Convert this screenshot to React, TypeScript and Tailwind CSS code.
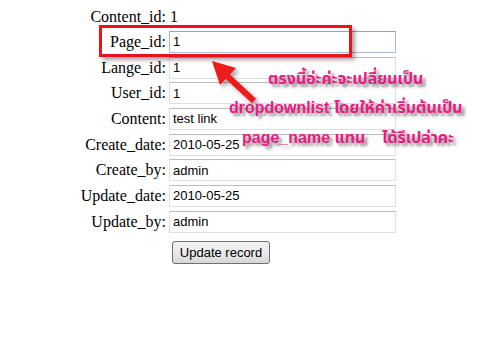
import React from "react";

const fields = [
  { label: "Page_id:", value: "1", focus: true },
  { label: "Lange_id:", value: "1" },
  { label: "User_id:", value: "1" },
  { label: "Content:", value: "test link" },
  { label: "Create_date:", value: "2010-05-25" },
  { label: "Create_by:", value: "admin" },
  { label: "Update_date:", value: "2010-05-25" },
  { label: "Update_by:", value: "admin" },
];

const note =
  "absolute text-[16px] font-bold text-[#ea1a82] whitespace-nowrap [text-shadow:3px_3px_3px_#8a8a8a] font-['Liberation_Sans','Tahoma','Noto_Sans_Thai','Loma','Garuda','DejaVu_Sans',sans-serif]";

export default function App() {
  return (
    <div className="relative w-[495px] h-[346px] overflow-hidden bg-white text-black font-['Liberation_Serif',serif] text-[16px]">
      <div className="pt-[5px]">
        <div className="flex h-[24px] items-center">
          <div className="w-[166px] text-right">Content_id:</div>
          <div className="pl-[4px]">1</div>
        </div>

        {fields.map((f) => (
          <div key={f.label} className="flex h-[25.7px] items-center">
            <div className="w-[166px] text-right">{f.label}</div>
            <div className="pl-[3px]">
              <input
                readOnly
                value={f.value}
                className={
                  "block w-[227px] h-[22px] px-[3px] bg-white font-['Liberation_Sans',Arial,sans-serif] text-[13px] text-black outline-none border " +
                  (f.focus
                    ? "border-[#a9bdd2] border-t-[#8fa6bd]"
                    : "border-[#dcdfe3] border-t-[#b9bcc1]")
                }
              />
            </div>
          </div>
        ))}

        <div className="flex pt-[5px]">
          <div className="w-[166px]" />
          <div className="pl-[6px]">
            <button className="h-[23px] w-[98px] rounded-[3px] border border-[#707070] bg-gradient-to-b from-[#f3f3f3] via-[#ebebeb] to-[#d6d6d6] font-['Liberation_Sans',Arial,sans-serif] text-[13px] text-black">
              Update record
            </button>
          </div>
        </div>
      </div>

      {/* red highlight box */}
      <div className="absolute left-[99px] top-[25px] w-[253px] h-[32px] border-[3px] border-[#e8141b] shadow-[3px_3px_4px_rgba(0,0,0,0.35)]" />

      {/* arrow */}
      <svg className="absolute left-0 top-0" width="495" height="346" viewBox="0 0 495 346">
        <defs>
          <filter id="sh" x="-20%" y="-20%" width="150%" height="150%">
            <feDropShadow dx="3" dy="3" stdDeviation="2" floodColor="#000" floodOpacity="0.35" />
          </filter>
        </defs>
        <g filter="url(#sh)" fill="#ec1a1a">
          <line x1="226" y1="75" x2="254" y2="101" stroke="#ec1a1a" strokeWidth="6" />
          <polygon points="212,61 236,68 220,85" />
        </g>
      </svg>

      {/* annotation */}
      <div className={note + " left-[268px] top-[67px]"}>ตรงนี้อ่ะค่ะจะเปลี่ยนเป็น</div>
      <div className={note + " left-[229px] top-[96px]"}>dropdownlist โดยให้ค่าเริ่มต้นเป็น</div>
      <div className={note + " left-[242px] top-[126px]"}>page_name แทน</div>
      <div className={note + " left-[382px] top-[126px]"}>ได้รึเปล่าคะ</div>
    </div>
  );
}
